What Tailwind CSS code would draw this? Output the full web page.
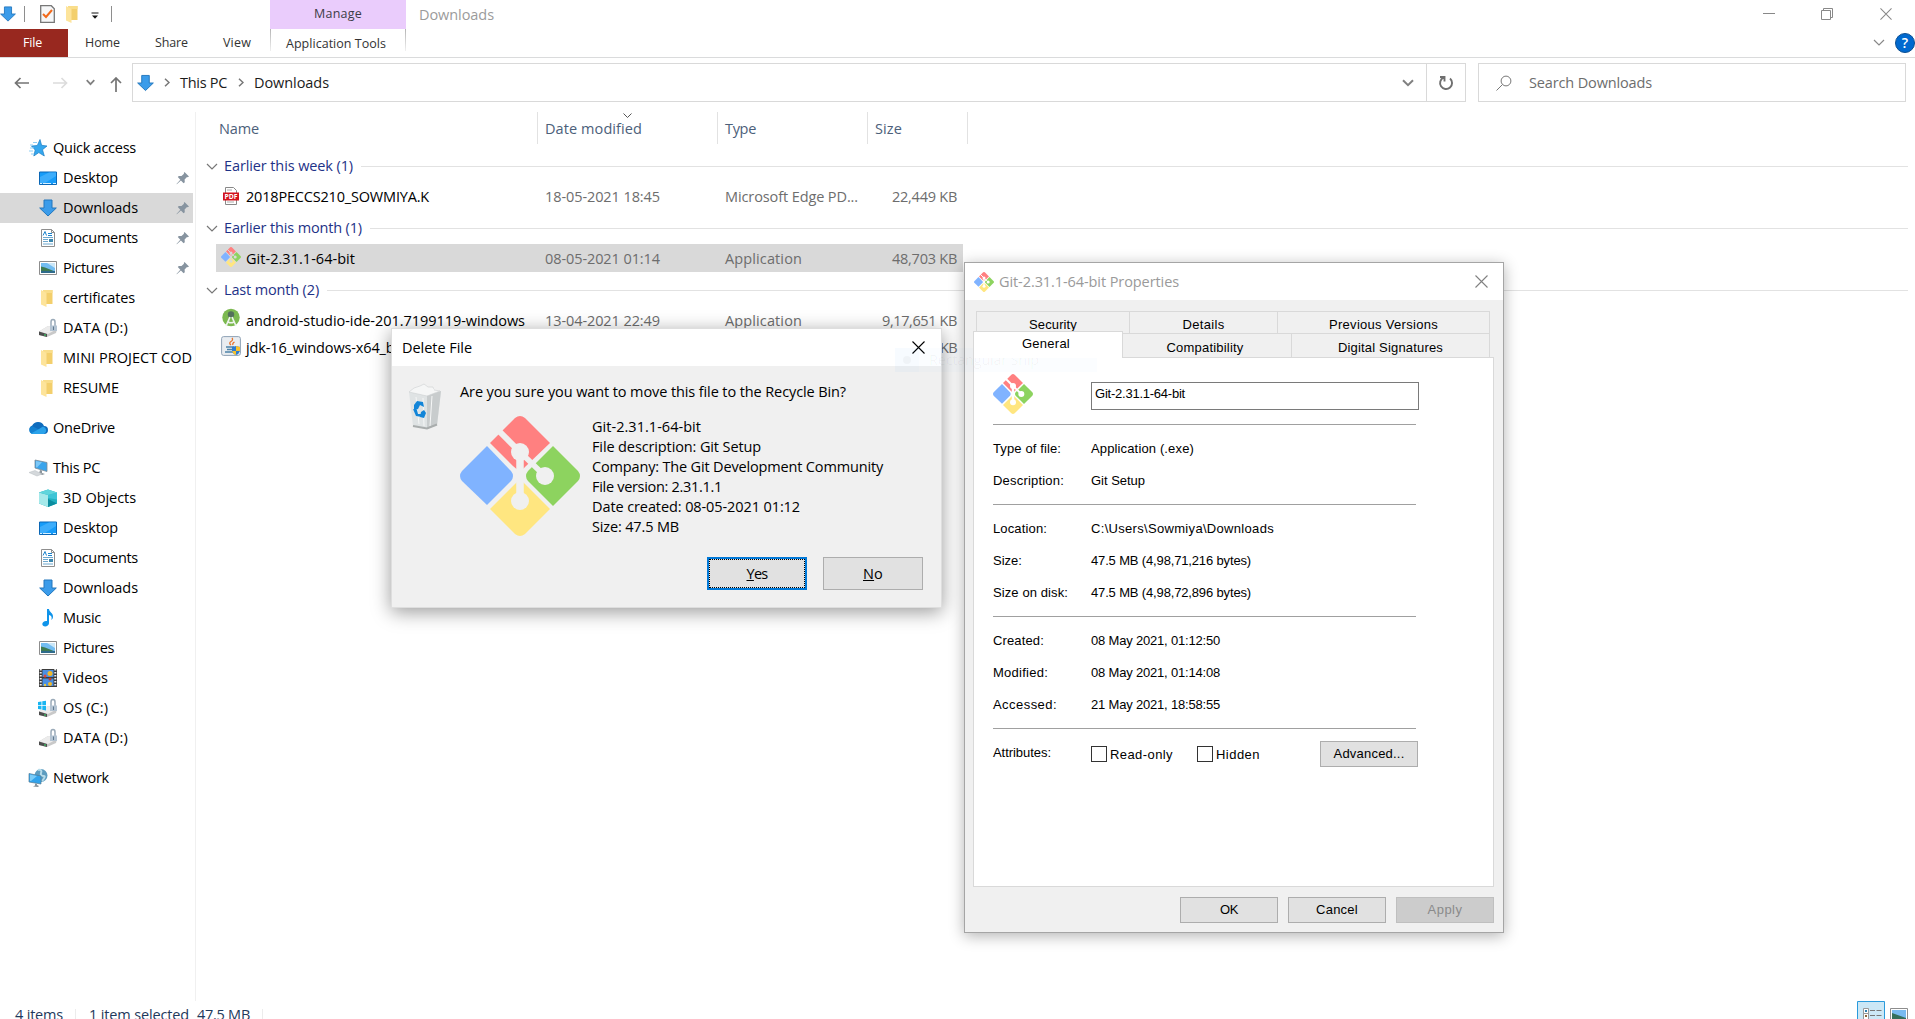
<!DOCTYPE html>
<html lang="en">
<head>
<meta charset="utf-8">
<title>Downloads</title>
<script src="https://cdn.jsdelivr.net/npm/@tailwindcss/browser@4"></script>
</head>
<body class="relative h-[1019px] w-[1915px] overflow-hidden bg-white font-['Open_Sans','Noto_Sans',sans-serif] text-[14.5px] leading-5 text-black">

<!-- icon library -->
<svg class="hidden" aria-hidden="true">
  <symbol id="down" viewBox="0 0 18 18"><path d="M5 1h8v8h4.3L9 17 .7 9H5z" fill="#3b9cea" stroke="#2277bd"/></symbol>
  <symbol id="folder" viewBox="0 0 20 20"><path d="M5 2h9.500v14H5z" fill="#f3cf6c"/><path d="M5 2h9.500v3H5z" fill="#f9dd8a"/><path d="M3 2l5.500 3v14L3 16.500z" fill="#fde49b"/></symbol>
  <symbol id="desktop" viewBox="0 0 20 20"><path d="M1.500 4h17v12.500h-17z" fill="#169cf9" stroke="#0b67b5"/><path d="M2 15V9l9-4.500h7V8L7 15z" fill="#3dadfb"/><path d="M2 15.500h2m1 0h8m2 0h3" stroke="#d9f1ff"/></symbol>
  <symbol id="doc" viewBox="0 0 20 20"><path d="M3.500 1.500h10l3 3v14h-13z" fill="#fff" stroke="#8e8e8e"/><path d="M13.500 1.500v3h3" fill="none" stroke="#8e8e8e"/><path d="M5 7.500l2-4 1.500 4M10 5.500h4M10 7.500h4" stroke="#1a83cc" fill="none"/><path d="M5 9.500h10M5 11.500h5M5 13.500h5M5 16h10" stroke="#6fa9cf"/><path d="M11 11h4v3h-4z" fill="#3b86ad"/></symbol>
  <symbol id="pics" viewBox="0 0 20 20"><path d="M1.500 3.500h17v13h-17z" fill="#fff" stroke="#8d8d8d"/><path d="M3 5h14v10H3z" fill="#73bdf2"/><path d="M9 5h8v5z" fill="#cbe7f8"/><path d="M3 8.500l4 1 10 4V15H3z" fill="#3e7b52"/><path d="M3 13h14v2H3z" fill="#2e6b8b"/></symbol>
  <symbol id="drive" viewBox="0 0 20 20"><path d="M1 13.500L10 8l9 3-1 4-9 4-8-2z" fill="#c9c9c9"/><path d="M1 13.500L10 8l9 3-9 5z" fill="#ececec"/><path d="M1 13.500l8 2.500v3l-8-2z" fill="#4e4e4e"/><path d="M6 16.500h2v1H6z" fill="#3be06b"/><path d="M13 8V4a2 2.500 0 0 1 4 0v5" fill="none" stroke="#9babb9" stroke-width="1.500"/><path d="M12 7.500h7V13h-7z" fill="#b3c3d2"/><path d="M15 8.500h1V12h-1z" fill="#5f7990"/></symbol>
  <symbol id="osdrive" viewBox="0 0 20 20"><use href="#drive" width="20" height="20"/><path d="M0 4l3.500-.6v3.800H0zM4.300 3.300L8 2.700v4.500H4.300zM0 8h3.500v3.600L0 11zM4.300 8H8v4.400l-3.700-.6z" fill="#18b5f1"/></symbol>
  <symbol id="star" viewBox="0 0 20 20"><path d="M12 1.500l1.600 5.800 5.400.7-4.500 3.700 1.800 6.300-5.500-3.400-5 3.400 1.400-6L3.500 8l5.800-.5z" fill="#35a7ee" stroke="#1a7dc4" stroke-width=".7"/><path d="M5 4.500h4M2 7h3M2 10h4M1 13h4M3 16h3" stroke="#8fcff5"/></symbol>
  <symbol id="pin" viewBox="0 0 14 14"><path d="M8.500 1L13 5.500l-1.300.7-.7-.2-2.400 2.500.2 2.700-1.200 1L4.900 9.500.8 13.300l-.3-.3 3.800-4.200L1.800 6l1-1.100 2.700.2L8 2.800l-.2-.8z" fill="#8794a0"/></symbol>
  <symbol id="cloud" viewBox="0 0 20 14"><path d="M5 13a4.500 4.500 0 0 1-.8-8.500A6.500 6.500 0 0 1 16 5a4 4 0 0 1 0 8z" fill="#0f6cbd"/><path d="M4 5l7 3.500L8 13H4.500A4.200 4.200 0 0 1 4 5z" fill="#1380d0"/><path d="M3 12.500L11 8l4-2.500A4 4 0 0 1 16 13H5z" fill="#2aa2ea"/></symbol>
  <symbol id="pc" viewBox="0 0 20 20"><path d="M7 2l12 2.500v9L7 10z" fill="#39a4ec" stroke="#7d8a94" stroke-width=".8"/><path d="M8 3l6 1.300L9 9.500l-1-.2z" fill="#7cc8f8"/><path d="M12 12l2 .6V15l3 1-3 1-3-1.500z" fill="#8c959c"/><path d="M1 14.500l6-2 7 3.500-5 2z" fill="#d4d8db" stroke="#b6bcc1" stroke-width=".5"/></symbol>
  <symbol id="cube" viewBox="0 0 20 20"><path d="M10 1.500l9 3v11L10 19l-9-3.500v-11z" fill="#22b0c0"/><path d="M1 4.500l9 2.500v12l-9-3.500z" fill="#a5e9ea"/><path d="M10 7l9-2.500v7L10 10z" fill="#3dc4d6"/><path d="M10 11l9 4.500L10 19z" fill="#0b8d9f"/><path d="M10 1.500l9 3L10 7 1 4.500z" fill="#5fd5dc"/></symbol>
  <symbol id="music" viewBox="0 0 20 20"><path d="M9 1h2c0 3 4.500 4 4 8-.2 1.800-1 2.500-1.800 3 1.300-3-.2-4.500-2.200-5v8.300c0 2-2 3.200-3.800 3.200C5.500 18.500 4.300 17.500 4.300 16c0-2 2.200-3.500 4.700-3z" fill="#0f94ea"/></symbol>
  <symbol id="video" viewBox="0 0 20 20"><path d="M1 1h18v18H1z" fill="#3c3c3c"/><path d="M2.700 1v18M17.300 1v18" stroke="#eee" stroke-width="2" stroke-dasharray="1.500 1.500"/><path d="M4.500 2h11v7h-11zM4.500 10.500h11V18h-11z" fill="#4b8fe2"/><circle cx="12" cy="5.500" r="2.500" fill="#f0b92b"/><circle cx="7" cy="8" r="1.500" fill="#df4638"/><circle cx="12" cy="11" r="1.500" fill="#c33b22"/><circle cx="12" cy="16" r="2" fill="#f0b92b"/><circle cx="7" cy="17" r="1.200" fill="#e8cb45"/></symbol>
  <symbol id="net" viewBox="0 0 20 20"><circle cx="13" cy="7.500" r="6.500" fill="#5d9dc0"/><path d="M10 2c3-1 4 1 3 3s1 3 3 3-1 4-2 5" fill="none" stroke="#b7dcea" stroke-width="2"/><path d="M1 5.500l12 2.500v8L1 14z" fill="#31a3ec" stroke="#567b93" stroke-width=".7"/><path d="M2 6.500l7 1.500-6 5H2z" fill="#7accf8"/><path d="M7 15.500v2l-2 1 5 .5 1-1-2-1V16z" fill="#88949c"/></symbol>
  <symbol id="git" viewBox="0 0 120 120">
    <path d="M55 2q5-4 10 0L90 27 66 50l-6 6-7-6-23-23z" fill="#ff8080"/>
    <path d="M27 30l24 25q4 5 0 10L27 89 2 65q-4-5 0-10z" fill="#80b3ff"/>
    <path d="M93 30l25 25q4 5 0 10L93 90 68 65q-4-5 0-10z" fill="#8dd35f"/>
    <path d="M57 66h6l27 27-25 25q-5 4-10 0L30 93z" fill="#ffe680"/>
    <g stroke="currentColor" fill="none"><path d="M36 12L60 36" stroke-width="6"/><path d="M60 36v49" stroke-width="7.500"/><path d="M60 36l25 24" stroke-width="5.500"/></g>
    <g fill="currentColor"><circle cx="60" cy="36" r="9"/><circle cx="60" cy="85" r="9"/><circle cx="85" cy="60" r="9"/></g>
  </symbol>
  <symbol id="caret" viewBox="0 0 12 7"><path d="M1 1l5 5 5-5" fill="none" stroke="currentColor" stroke-width="1.200"/></symbol>
  <symbol id="cross" viewBox="0 0 13 13"><path d="M.5.500l12 12m0-12l-12 12" stroke="currentColor" stroke-width="1.100"/></symbol>
</svg>

<!-- title bar + ribbon tabs -->
<header class="flex h-[58px] border-b border-[#dadbdc]">
  <div class="flex w-[270px] flex-col">
    <div class="flex h-[29px] items-center">
      <svg class="h-[18px] w-4"><use href="#down"/></svg>
      <i class="ml-2 h-4 w-px bg-[#8e8e8e]"></i>
      <svg class="ml-[15px] h-[18px] w-[15px]" viewBox="0 0 15 18"><path d="M.7.7h10.600l3 3v13.600H.7z" fill="#f6f7f8" stroke="#777" stroke-width="1.300"/><path d="M3 9l3 3 6-7" fill="none" stroke="#f26a1b" stroke-width="2"/></svg>
      <svg class="ml-2 h-5 w-5"><use href="#folder"/></svg>
      <svg class="ml-2 mt-1 h-2 w-2" viewBox="0 0 8 8"><path d="M.5 1h7" stroke="#111"/><path d="M1 3.500h6L4 6.700z" fill="#111"/></svg>
      <i class="ml-[12px] h-4 w-px bg-[#8e8e8e]"></i>
    </div>
    <nav class="flex h-[29px] items-center text-[12.5px] text-[#333]">
      <b class="flex h-full w-[68px] items-center bg-[#98281f] pl-[23px] font-normal text-white"><span data-w="19">File</span></b>
      <span class="ml-[17px] w-[70px]"><span data-w="35">Home</span></span><span class="w-[68px]"><span data-w="33">Share</span></span><span data-w="28">View</span>
    </nav>
  </div>
  <div class="w-[136px] text-[12.5px] text-[#3c3c46]">
    <div class="flex h-[29px] items-center justify-center bg-[#eaccfc] pb-0.5"><span data-w="48">Manage</span></div>
    <div class="relative flex h-[29px] items-center justify-center text-[#333]"><i class="absolute left-0 top-0 h-[22px] w-px bg-linear-to-b from-[#b5b5b5] to-[#f0f0f0]"></i><span class="mr-1" data-w="100">Application Tools</span><i class="absolute right-0 top-0 h-[22px] w-px bg-linear-to-b from-[#b5b5b5] to-[#f0f0f0]"></i></div>
  </div>
  <div class="flex h-[29px] flex-1 items-center pl-[13px] text-[#9b9b9b]"><span data-w="75">Downloads</span></div>
  <div class="flex w-[160px] flex-col text-[#888]">
    <div class="flex h-[29px] items-center pl-2">
      <svg class="h-3 w-3" viewBox="0 0 12 12"><path d="M0 5.500h12" stroke="currentColor"/></svg>
      <svg class="ml-[46px] h-3 w-3" viewBox="0 0 12 12"><path d="M.5 2.500h9v9h-9zM2.500 2.500v-2h9v9h-2" fill="none" stroke="currentColor"/></svg>
      <svg class="ml-[47px] h-3 w-3"><use href="#cross"/></svg>
    </div>
    <div class="flex h-[29px] items-center pl-[118px]">
      <svg class="h-[7px] w-3"><use href="#caret"/></svg>
      <span class="ml-2.5 flex size-5 shrink-0 items-center justify-center rounded-full border border-[#0b4f92] bg-[#0069cf] text-[14px] font-semibold text-white">?</span>
    </div>
  </div>
</header>

<!-- address row -->
<div class="flex h-[54px] items-start pt-[5px]">
  <div class="flex h-[39px] w-[132px] items-center pl-3.5">
    <svg class="h-3 w-4" viewBox="0 0 16 12"><path d="M6.500 1l-5 5 5 5M1.500 6H15" fill="none" stroke="#747474" stroke-width="1.700"/></svg>
    <svg class="ml-[22px] h-3 w-4" viewBox="0 0 16 12"><path d="M9.500 1l5 5-5 5M14.500 6H1" fill="none" stroke="#dcdcdc" stroke-width="1.700"/></svg>
    <svg class="ml-[18px] h-[7px] w-[9px]" viewBox="0 0 9 7"><path d="M.7 1.200l3.800 4 3.800-4" fill="none" stroke="#808080" stroke-width="1.700"/></svg>
    <svg class="ml-[15px] mt-1 h-[15px] w-3" viewBox="0 0 12 15"><path d="M1 6l5-5 5 5M6 1v14" fill="none" stroke="#747474" stroke-width="1.700"/></svg>
  </div>
  <div class="flex h-[39px] w-[1295px] items-center border border-[#d9d9d9] pl-1 text-[#1b1b1b]">
    <svg class="h-[18px] w-[17px]"><use href="#down"/></svg>
    <svg class="ml-2.5 h-[9px] w-[6px]" viewBox="0 0 6 9"><path d="M1 .7l4 3.800-4 3.800" fill="none" stroke="#777" stroke-width="1.500"/></svg>
    <span class="ml-[10px] w-[58px]"><span data-w="47">This PC</span></span>
    <svg class="h-[9px] w-[6px]" viewBox="0 0 6 9"><path d="M1 .7l4 3.800-4 3.800" fill="none" stroke="#777" stroke-width="1.500"/></svg>
    <span class="ml-[10px]"><span data-w="75">Downloads</span></span>
    <svg class="ml-auto mr-3 h-[8px] w-[12px]" viewBox="0 0 12 8"><path d="M1 1.200l5 5 5-5" fill="none" stroke="#808080" stroke-width="2"/></svg>
  </div>
  <div class="-ml-px flex h-[39px] w-10 items-center justify-center border border-[#d9d9d9]">
    <svg class="h-4 w-4" viewBox="0 0 16 16"><path d="M12 3.500A6 6 0 1 1 5.500 2.600M2 2h4.500v4.500" fill="none" stroke="#6f6f6f" stroke-width="1.900"/></svg>
  </div>
  <div class="ml-3 flex h-[39px] w-[428px] items-center border border-[#d9d9d9] pl-[17px] text-[#6d6d6d]">
    <svg class="h-4 w-4" viewBox="0 0 16 16"><circle cx="10" cy="6" r="4.900" fill="none" stroke="#777"/><path d="M6.500 9.500L.5 15.500" stroke="#777"/></svg>
    <span class="ml-[17px]"><span data-w="123">Search Downloads</span></span>
  </div>
</div>

<main class="flex h-[889px]">
  <!-- navigation pane -->
  <aside class="w-[196px] border-r border-[#f0f0f0] pt-[21px] [&_a]:flex [&_a]:h-[30px] [&_a]:items-center [&_a]:whitespace-nowrap [&_a]:pl-[38px] [&_svg]:h-5 [&_svg]:w-5 [&_svg]:shrink-0">
    <section class="h-[280px]">
      <a class="pl-7!"><svg><use href="#star"/></svg><span class="ml-[5px]" data-w="83">Quick access</span></a>
      <a><svg><use href="#desktop"/></svg><span class="ml-[5px]" data-w="55">Desktop</span><svg class="ml-auto mr-[5px] h-3.5! w-3.5!"><use href="#pin"/></svg></a>
      <a class="w-[193px] bg-[#d9d9d9]"><svg class="p-px"><use href="#down"/></svg><span class="ml-[5px]" data-w="75">Downloads</span><svg class="ml-auto mr-[3px] h-3.5! w-3.5!"><use href="#pin"/></svg></a>
      <a><svg><use href="#doc"/></svg><span class="ml-[5px]" data-w="75">Documents</span><svg class="ml-auto mr-[5px] h-3.5! w-3.5!"><use href="#pin"/></svg></a>
      <a><svg><use href="#pics"/></svg><span class="ml-[5px]" data-w="51">Pictures</span><svg class="ml-auto mr-[5px] h-3.5! w-3.5!"><use href="#pin"/></svg></a>
      <a><svg><use href="#folder"/></svg><span class="ml-[5px]" data-w="72">certificates</span></a>
      <a><svg><use href="#drive"/></svg><span class="ml-[5px]" data-w="65">DATA (D:)</span></a>
      <a><svg><use href="#folder"/></svg><span class="ml-[5px]" data-w="129">MINI PROJECT COD</span></a>
      <a><svg><use href="#folder"/></svg><span class="ml-[5px]" data-w="56">RESUME</span></a>
    </section>
    <section class="h-10">
      <a class="pl-7!"><svg class="h-3.5!"><use href="#cloud"/></svg><span class="ml-[5px]" data-w="62">OneDrive</span></a>
    </section>
    <section class="h-[310px]">
      <a class="pl-7!"><svg><use href="#pc"/></svg><span class="ml-[5px]" data-w="47">This PC</span></a>
      <a><svg><use href="#cube"/></svg><span class="ml-[5px]" data-w="73">3D Objects</span></a>
      <a><svg><use href="#desktop"/></svg><span class="ml-[5px]" data-w="55">Desktop</span></a>
      <a><svg><use href="#doc"/></svg><span class="ml-[5px]" data-w="75">Documents</span></a>
      <a><svg class="p-px"><use href="#down"/></svg><span class="ml-[5px]" data-w="75">Downloads</span></a>
      <a><svg><use href="#music"/></svg><span class="ml-[5px]" data-w="38">Music</span></a>
      <a><svg><use href="#pics"/></svg><span class="ml-[5px]" data-w="51">Pictures</span></a>
      <a><svg><use href="#video"/></svg><span class="ml-[5px]" data-w="45">Videos</span></a>
      <a><svg><use href="#osdrive"/></svg><span class="ml-[5px]" data-w="45">OS (C:)</span></a>
      <a><svg><use href="#drive"/></svg><span class="ml-[5px]" data-w="65">DATA (D:)</span></a>
    </section>
    <a class="pl-7!"><svg><use href="#net"/></svg><span class="ml-[5px]" data-w="56">Network</span></a>
  </aside>

  <!-- file list -->
  <div class="flex-1">
    <div class="relative flex h-8 items-center text-[#4c607a] [&>div]:flex [&>div]:h-8 [&>div]:items-center [&>div]:border-r [&>div]:border-[#e2e2e2] [&>div]:pt-0.5">
      <div class="w-[342px] pl-[23px]"><span data-w="40">Name</span></div>
      <div class="w-[180px] pl-[7px]"><span data-w="97">Date modified</span></div>
      <div class="w-[150px] pl-[7px]"><span data-w="31">Type</span></div>
      <div class="w-[100px] pl-[7px]"><span data-w="27">Size</span></div>
      <svg class="absolute left-[427px] top-[1px] h-[5px] w-[9px] text-[#555]" viewBox="0 0 9 5"><path d="M.5.500l4 4 4-4" fill="none" stroke="currentColor"/></svg>
    </div>
    <div class="flex h-[38px] items-center pl-[10px] pr-[7px] pt-[6px] text-[#1e3287]"><svg class="h-[7px] w-3 text-[#777]"><use href="#caret"/></svg><span class="ml-[6px]" data-w="129">Earlier this week (1)</span><i class="ml-2 h-px flex-1 bg-[#e2e2e2]"></i></div>
    <div class="ml-5 flex h-7 w-[747px] items-center pl-1.5 text-[#6d6d6d] [&>span]:pt-px">
      <svg class="mr-[3px] h-[18px] w-[18px]" viewBox="0 0 18 18"><path d="M3.500.5h8l3 3v14h-11z" fill="#fff" stroke="#888"/><path d="M5 3h5M5 15h7" stroke="#aaa"/><path d="M1 5.500h16v8H1z" fill="#d3121d"/><text x="9" y="12.200" text-anchor="middle" font-size="6.800" font-weight="700" fill="#fff">PDF</text></svg>
      <span class="w-[302px] pl-[3px] text-black"><span data-w="183">2018PECCS210_SOWMIYA.K</span></span><span class="w-[180px]"><span data-w="115">18-05-2021 18:45</span></span><span class="w-[130px]"><span data-w="133">Microsoft Edge PD...</span></span><span class="ml-auto mr-1.5"><span data-w="65">22,449 KB</span></span></div>
    <div class="flex h-[34px] items-center pl-[10px] pr-[7px] pt-[2px] text-[#1e3287]"><svg class="h-[7px] w-3 text-[#777]"><use href="#caret"/></svg><span class="ml-[6px]" data-w="138">Earlier this month (1)</span><i class="ml-2 h-px flex-1 bg-[#e2e2e2]"></i></div>
    <div class="ml-5 flex h-7 w-[747px] items-center bg-[#d9d9d9] pl-[5px] text-[#6d6d6d] [&>span]:pt-px">
      <svg class="mb-0.5 mr-[2px] h-5 w-5 text-[#d9d9d9]"><use href="#git"/></svg>
      <span class="w-[302px] pl-[3px] text-black"><span data-w="109">Git-2.31.1-64-bit</span></span><span class="w-[180px]"><span data-w="115">08-05-2021 01:14</span></span><span class="w-[130px]"><span data-w="77">Application</span></span><span class="ml-auto mr-1.5"><span data-w="65">48,703 KB</span></span></div>
    <div class="flex h-[34px] items-center pl-[10px] pr-[7px] pt-[2px] text-[#1e3287]"><svg class="h-[7px] w-3 text-[#777]"><use href="#caret"/></svg><span class="ml-[6px]" data-w="95">Last month (2)</span><i class="ml-2 h-px flex-1 bg-[#e2e2e2]"></i></div>
    <div class="ml-5 flex h-7 w-[747px] items-center pl-[5px] text-[#6d6d6d] [&>span]:pt-px">
      <svg class="mb-1 mr-[2px] h-5 w-5" viewBox="0 0 20 20"><circle cx="10" cy="9.500" r="8.700" fill="#7cb950"/><circle cx="10" cy="6.500" r="3.200" fill="#54705b"/><path d="M9 9l-4 9M11 9l4 9" stroke="#eef3ee" stroke-width="1.700"/><path d="M7 14q3 1.500 6 0" stroke="#eef3ee" stroke-width="1.500" fill="none"/></svg>
      <span class="w-[302px] pl-[3px] text-black"><span data-w="279">android-studio-ide-201.7199119-windows</span></span><span class="w-[180px]"><span data-w="115">13-04-2021 22:49</span></span><span class="w-[130px]"><span data-w="77">Application</span></span><span class="ml-auto mr-1.5"><span data-w="75">9,17,651 KB</span></span></div>
    <div class="ml-5 flex h-7 w-[747px] items-center pl-[5px] text-[#6d6d6d]">
      <svg class="mb-1 mr-[2px] h-5 w-5" viewBox="0 0 20 20"><rect x=".6" y=".6" width="18.800" height="18.800" rx="2" fill="#e9edf1" stroke="#8fa2b5"/><path d="M10 9q-2.500-2 0-3.500t1-3.500M12 9q-1-1.500 1.500-3" fill="none" stroke="#e8732a" stroke-width="1.300"/><path d="M5 11h8M6 13.500h6M4 16h8" stroke="#4d83a8" stroke-width="1.300"/><path d="M11 11l4-1 4 1v4q-1 3-4 4-3-1-4-4z" fill="#2d7cd0"/><path d="M15 10l4 1v4h-4zM11 15h4v4q-3-1-4-4z" fill="#f7c22d"/></svg>
      <span class="w-[494px] pl-[3px] text-black"><span data-w="152">jdk-16_windows-x64_bi</span></span><span class="ml-auto mr-1.5"><span data-w="17">KB</span></span></div>
  </div>
</main>

<!-- status bar -->
<footer class="flex h-[18px] items-start overflow-hidden text-[#1e395b]">
  <div class="mt-1 flex h-6 shrink-0 items-start pl-[15px]">
    <span data-w="48">4 items</span><i class="ml-3 mt-1 h-5 w-px bg-[#ececec]"></i><span class="ml-[13px]" data-w="100">1 item selected</span><span class="ml-2" data-w="53">47.5 MB</span><i class="ml-3 mt-1 h-5 w-px bg-[#ececec]"></i>
  </div>
  <div class="ml-auto flex">
    <svg class="h-[18px] w-7" viewBox="0 0 28 18"><path d="M.5 20V.5h27V20" fill="#cce8f6" stroke="#2a9bdc"/><path d="M6.500 7.500h5v5h-5zM6.500 12.500h5v6h-5z" fill="#fff" stroke="#999"/><path d="M8 9h2v2H8z" fill="#2d7fae"/><path d="M8 14h2v2H8z" fill="#8c6839"/><path d="M13 9.500h5m1.500 0h5M13 14.500h5m1.500 0h5" stroke="#777"/></svg>
    <svg class="ml-[5px] mr-[7px] h-[18px] w-[18px]" viewBox="0 0 18 18"><path d="M.5 20V7.500h17V20" fill="#fff" stroke="#8d8d8d"/><path d="M2 9h14v9H2z" fill="#78baf0"/><path d="M2 12l14 5v2H2z" fill="#356f5c"/></svg>
  </div>
</footer>

<!-- properties window -->
<section class="absolute left-[964px] top-[262px] h-[671px] w-[540px] border border-[#a5a5a5] bg-[#f0f0f0] font-['Liberation_Sans',Arial,sans-serif] text-[13px] leading-4 shadow-[0_3px_14px_rgba(0,0,0,0.3)]">
  <div class="flex h-[37px] items-center bg-white pl-[9px] pr-[15px] font-['Open_Sans','Noto_Sans',sans-serif] text-[14.5px] text-[#9a9a9a]">
    <svg class="h-5 w-5 text-white"><use href="#git"/></svg><span class="ml-[5px]" data-w="180">Git-2.31.1-64-bit Properties</span><svg class="ml-auto h-[13px] w-[13px] text-[#808080]"><use href="#cross"/></svg>
  </div>
  <div class="ml-[11px] mt-[11px] flex h-[23px] w-[514px] border border-[#d9d9d9] [&>div]:flex [&>div]:items-end [&>div]:justify-center">
    <div class="w-[153px] border-r border-[#d9d9d9]"><span data-w="48">Security</span></div><div class="w-[148px] border-r border-[#d9d9d9]"><span data-w="42">Details</span></div><div class="flex-1"><span data-w="109">Previous Versions</span></div>
  </div>
  <div class="relative z-10 -mt-[3px] ml-2 flex h-[27px] items-end">
    <div class="z-10 flex h-[27px] w-[150px] items-center justify-center border border-b-0 border-[#d9d9d9] bg-white pb-0.5 pr-1"><span data-w="48">General</span></div>
    <div class="flex h-6 w-[169px] items-end justify-center overflow-hidden border-r border-[#d9d9d9] pb-0.5 pr-1"><span data-w="77">Compatibility</span></div>
    <div class="flex h-6 w-[198px] items-end justify-center overflow-hidden border-r border-[#d9d9d9] pb-0.5"><span data-w="105">Digital Signatures</span></div>
  </div>
  <div class="-mt-px ml-2 h-[530px] w-[521px] border border-[#d9d9d9] bg-white pl-[19px]">
    <div class="flex h-[67px] items-start border-b border-[#a0a0a0] pt-[16px] w-[423px]">
      <svg class="h-10 w-10 shrink-0 text-white"><use href="#git"/></svg>
      <div class="ml-[58px] mt-2 h-7 w-[328px] shrink-0 border border-[#7a7a7a] pl-[3px] pt-[3px]"><span data-w="90">Git-2.31.1-64-bit</span></div>
    </div>
    <div class="grid h-20 w-[423px] grid-cols-[98px_1fr] content-start border-b border-[#a0a0a0] pt-2 leading-8"><span><span data-w="68">Type of file:</span></span><span><span data-w="103">Application (.exe)</span></span><span><span data-w="71">Description:</span></span><span><span data-w="54">Git Setup</span></span></div>
    <div class="grid h-[112px] w-[423px] grid-cols-[98px_1fr] content-start border-b border-[#a0a0a0] pt-2 leading-8"><span><span data-w="54">Location:</span></span><span><span data-w="183">C:\Users\Sowmiya\Downloads</span></span><span><span data-w="29">Size:</span></span><span><span data-w="160">47.5 MB (4,98,71,216 bytes)</span></span><span><span data-w="75">Size on disk:</span></span><span><span data-w="160">47.5 MB (4,98,72,896 bytes)</span></span></div>
    <div class="grid h-[112px] w-[423px] grid-cols-[98px_1fr] content-start border-b border-[#a0a0a0] pt-2 leading-8"><span><span data-w="51">Created:</span></span><span><span data-w="129">08 May 2021, 01:12:50</span></span><span><span data-w="55">Modified:</span></span><span><span data-w="129">08 May 2021, 01:14:08</span></span><span><span data-w="64">Accessed:</span></span><span><span data-w="129">21 May 2021, 18:58:55</span></span></div>
    <div class="flex items-start pt-3">
      <span class="w-[98px] pt-1"><span data-w="58">Attributes:</span></span>
      <i class="mt-[5px] h-4 w-4 border border-[#333]"></i><span class="ml-[3px] w-[87px] pt-1.5 text-[13px]"><span data-w="63">Read-only</span></span>
      <i class="mt-[5px] h-4 w-4 border border-[#333]"></i><span class="ml-[3px] w-[104px] pt-1.5 text-[13px]"><span data-w="44">Hidden</span></span>
      <button class="flex h-[26px] w-[98px] items-center justify-center border border-[#adadad] bg-[#e1e1e1] text-[13px]"><span data-w="71">Advanced...</span></button>
    </div>
  </div>
  <div class="mt-[10px] flex justify-end gap-2.5 pr-[9px] [&>button]:flex [&>button]:h-[26px] [&>button]:w-[98px] [&>button]:items-center [&>button]:justify-center [&>button]:border [&>button]:border-[#adadad] [&>button]:bg-[#e1e1e1]">
    <button><span data-w="18">OK</span></button><button><span data-w="42">Cancel</span></button><button class="border-[#bfbfbf]! bg-[#cccccc]! text-[#8a8a8a]"><span data-w="35">Apply</span></button>
  </div>
</section>

<!-- delete confirmation -->
<section class="absolute left-[391px] top-[328px] h-[280px] w-[551px] border border-[#dedede] bg-[#f0f0f0] shadow-[0_4px_18px_rgba(0,0,0,0.4)]">
  <div class="flex h-[37px] items-center bg-white pl-2.5 pr-[16px]"><span data-w="70">Delete File</span><svg class="ml-auto h-[13px] w-[13px]"><use href="#cross"/></svg></div>
  <div class="flex pl-4 pt-[16px]">
    <svg class="mt-px h-[48px] w-[34px]" viewBox="0 0 34 48"><path d="M1 9l18 3 14-4-4 34-10 4-14-3z" fill="#dfe3e4"/><path d="M19 12l14-4-4 34-10 4z" fill="#c8cccd"/><path d="M1 9L6 5l6-2 4-2 4 3h5l1 3 6 1-13 5z" fill="#f5f6f6" stroke="#ccd0d1" stroke-width=".6"/><path d="M8 7l3 3 6-5 3 5 6-4M8 14l3 27M15 15l1 28M24 13l-2 30" stroke="#f6f7f7" fill="none"/><path d="M5 43l14 2.500 10-4" stroke="#a9adad" stroke-width="2" fill="none"/><path d="M6 22l3-4 6 1 1 5-4-2-2 4-4 2zM5 26l4 1 1 4h4v3l-6-1zM13 29l3-2 2 3-2 5-4-1z" fill="#1285d8"/></svg>
    <div class="ml-[18px]">
      <span data-w="386">Are you sure you want to move this file to the Recycle Bin?</span>
      <div class="flex pt-[14px]">
        <svg class="h-[120px] w-[120px] text-[#f0f0f0]"><use href="#git"/></svg>
        <div class="ml-3 mt-px flex flex-col items-start whitespace-nowrap"><span data-w="109">Git-2.31.1-64-bit</span><span data-w="169">File description: Git Setup</span><span data-w="291">Company: The Git Development Community</span><span data-w="130">File version: 2.31.1.1</span><span data-w="208">Date created: 08-05-2021 01:12</span><span data-w="87">Size: 47.5 MB</span></div>
      </div>
    </div>
  </div>
  <div class="mt-[20px] flex justify-end gap-4 pr-[18px]">
    <button class="flex h-[33px] w-[100px] border-2 border-[#0078d7] bg-[#e1e1e1]"><span class="flex h-full w-full items-center justify-center border border-dotted border-black"><span data-w="21"><u>Y</u>es</span></span></button>
    <button class="flex h-[33px] w-[100px] items-center justify-center border border-[#adadad] bg-[#e1e1e1]"><span data-w="20"><u>N</u>o</span></button>
  </div>
</section>

<!-- fading snip menu entry -->
<div class="absolute left-[895px] top-[348px] flex h-6 w-[202px] items-center bg-[#3c8cff]/2 text-black/4"><i class="h-6 w-6 bg-[#3c8cff]/2 p-2"><b class="block h-2 w-2 rounded-full bg-black/3"></b></i><span class="ml-2.5" data-w="110">Rectangular Snip</span></div>

<script>
  function fitLabels() {
    const els = [...document.querySelectorAll('[data-w]')];
    for (const el of els) { el.style.whiteSpace = 'nowrap'; el.style.letterSpacing = '0px'; }
    const range = document.createRange();
    const gaps = els.map(el => {
      range.selectNodeContents(el);
      return (+el.dataset.w - range.getBoundingClientRect().width) / el.textContent.length;
    });
    els.forEach((el, i) => { el.style.letterSpacing = gaps[i].toFixed(3) + 'px'; });
  }
  fitLabels();
  window.addEventListener('load', fitLabels);
  document.fonts.ready.then(fitLabels);
  setTimeout(fitLabels, 60);
</script>
</body>
</html>
